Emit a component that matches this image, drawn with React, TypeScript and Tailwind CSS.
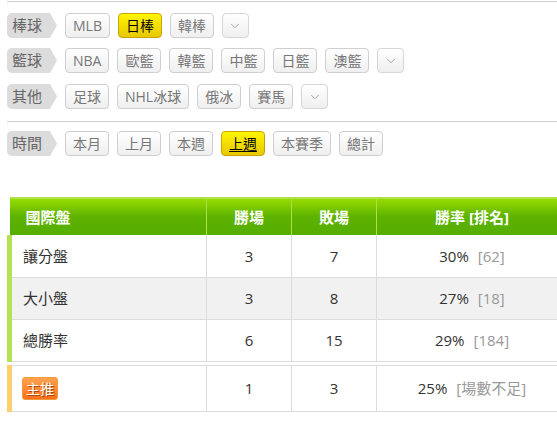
import { ChevronDown } from "lucide-react";

const FONT = { fontFamily: '"Open Sans", "Noto Sans CJK TC", sans-serif' };

type Btn = { text: string; active?: boolean; underline?: boolean };

const FILTERS: { label: string; items: Btn[]; more?: boolean; mt: string }[] = [
  { label: "棒球", items: [{ text: "MLB" }, { text: "日棒", active: true }, { text: "韓棒" }], more: true, mt: "mt-[11px]" },
  {
    label: "籃球",
    items: [{ text: "NBA" }, { text: "歐籃" }, { text: "韓籃" }, { text: "中籃" }, { text: "日籃" }, { text: "澳籃" }],
    more: true,
    mt: "mt-[10px]",
  },
  { label: "其他", items: [{ text: "足球" }, { text: "NHL冰球" }, { text: "俄冰" }, { text: "賽馬" }], more: true, mt: "mt-[11px]" },
];

const TIMES: Btn[] = [
  { text: "本月" },
  { text: "上月" },
  { text: "本週" },
  { text: "上週", active: true, underline: true },
  { text: "本賽季" },
  { text: "總計" },
];

const ROWS = [
  { name: "讓分盤", win: 3, lose: 7, rate: "30%", rank: "[62]", bg: "bg-white" },
  { name: "大小盤", win: 3, lose: 8, rate: "27%", rank: "[18]", bg: "bg-[#f1f1f1]" },
  { name: "總勝率", win: 6, lose: 15, rate: "29%", rank: "[184]", bg: "bg-white" },
];

function Tag({ label }: { label: string }) {
  return (
    <div className="mr-[8px] flex h-[25px] w-[50px] items-center rounded-l-[5px] bg-[#dcdcdc] pl-[5px] text-[15px] text-[#666] [clip-path:polygon(0_0,86%_0,100%_50%,86%_100%,0_100%)]">
      {label}
    </div>
  );
}

function Button({ b }: { b: Btn }) {
  const cls = b.active
    ? "border-[#c8a400] bg-gradient-to-b from-[#fff500] to-[#e8c800] text-black"
    : "border-[#cfcfcf] bg-gradient-to-b from-white to-[#efefef] text-[#777]";
  return (
    <div className={`flex h-[25px] items-center rounded-[4px] border px-[7px] text-[14px] ${cls}`}>
      <span className={b.underline ? "underline underline-offset-2" : ""}>{b.text}</span>
    </div>
  );
}

function More() {
  return (
    <div className="flex h-[25px] w-[27px] items-center justify-center rounded-[4px] border border-[#d6d6d6] bg-gradient-to-b from-white to-[#efefef] text-[#999]">
      <ChevronDown size={14} strokeWidth={1.5} />
    </div>
  );
}

export default function App() {
  return (
    <div className="h-[424px] w-[557px] overflow-hidden bg-white pl-[7px]" style={FONT}>
      <div className="mt-[1px] h-[1px] bg-[#cfcfcf]" />

      {FILTERS.map((row) => (
        <div key={row.label} className={`flex items-center ${row.mt}`}>
          <Tag label={row.label} />
          <div className="flex gap-[8px]">
            {row.items.map((b) => (
              <Button key={b.text} b={b} />
            ))}
            {row.more && <More />}
          </div>
        </div>
      ))}

      <div className="mt-[12px] h-[1px] bg-[#cfcfcf]" />

      <div className="mt-[9px] flex items-center">
        <Tag label="時間" />
        <div className="flex gap-[8px]">
          {TIMES.map((b) => (
            <Button key={b.text} b={b} />
          ))}
        </div>
      </div>

      <table className="mt-[41px] w-[560px] border-collapse text-[15px]">
        <colgroup>
          <col className="w-[197px]" />
          <col className="w-[85px]" />
          <col className="w-[85px]" />
          <col />
        </colgroup>
        <thead>
          <tr className="h-[37px] bg-gradient-to-b from-[#9ade00] via-[#5db300] to-[#55ad00] font-bold text-white">
            <th className="border-t-2 border-[#aee04a] pl-[16px] text-left">國際盤</th>
            <th className="border-l border-t-2 border-[#aee04a]">勝場</th>
            <th className="border-l border-t-2 border-[#aee04a]">敗場</th>
            <th className="border-l border-t-2 border-[#aee04a]">勝率 [排名]</th>
          </tr>
        </thead>
        <tbody className="text-[#333]">
          {ROWS.map((r) => (
            <tr key={r.name} className={`h-[42px] border-b border-[#dcdcdc] ${r.bg}`}>
              <td className="border-l-[5px] border-[#b4e253] pl-[11px]">{r.name}</td>
              <td className="border-l border-[#dcdcdc] text-center">{r.win}</td>
              <td className="border-l border-[#dcdcdc] text-center">{r.lose}</td>
              <td className="border-l border-[#dcdcdc] text-center">
                {r.rate}
                <span className="ml-[9px] text-[#999]">{r.rank}</span>
              </td>
            </tr>
          ))}
          <tr className="h-[4px] bg-white">
            <td colSpan={4} className="p-0" />
          </tr>
          <tr className="h-[46px] border-y border-[#dcdcdc] bg-white">
            <td className="border-l-[5px] border-[#ffcf70] pl-[10px]">
              <span className="inline-flex h-[23px] w-[36px] items-center justify-center rounded-[3px] border border-[#f29a3c] bg-gradient-to-b from-[#ffa24d] to-[#ff6e1a] text-[14px] text-white [text-shadow:1px_1px_0_#a84a00]">
                主推
              </span>
            </td>
            <td className="border-l border-[#dcdcdc] text-center">1</td>
            <td className="border-l border-[#dcdcdc] text-center">3</td>
            <td className="border-l border-[#dcdcdc] text-center">
              25%
              <span className="ml-[9px] text-[#999]">[場數不足]</span>
            </td>
          </tr>
        </tbody>
      </table>
    </div>
  );
}
